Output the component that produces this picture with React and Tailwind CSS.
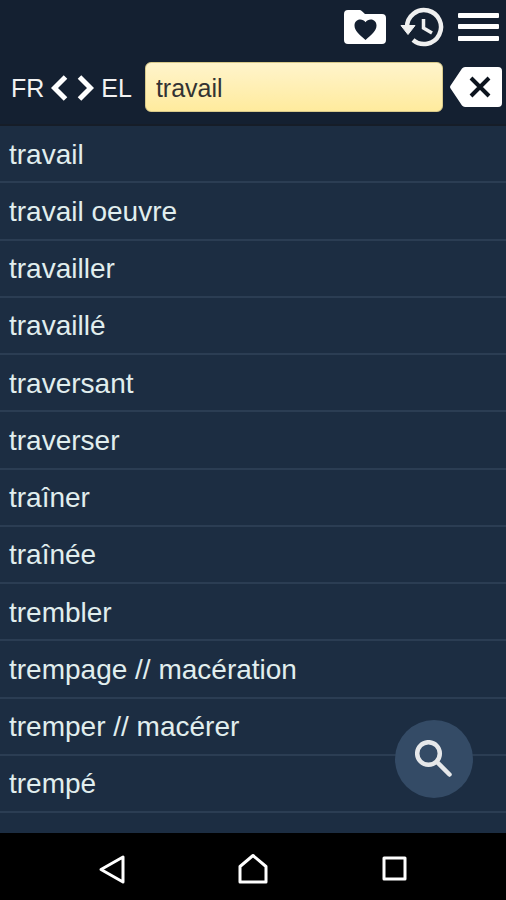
import { useState } from "react";

const words = [
  "travail",
  "travail oeuvre",
  "travailler",
  "travaillé",
  "traversant",
  "traverser",
  "traîner",
  "traînée",
  "trembler",
  "trempage // macération",
  "tremper // macérer",
  "trempé",
];

const FavoritesIcon = () => (
  <svg className="h-[34px] w-[42px]" viewBox="0 0 42 34" aria-hidden="true">
    <path
      fill="#fff"
      d="M4 0h11a4 4 0 0 1 3 1.200L21 4h17a4 4 0 0 1 4 4v22a4 4 0 0 1-4 4H4a4 4 0 0 1-4-4V4a4 4 0 0 1 4-4z"
    />
    <path
      fill="#142031"
      d="M21.500 30C15.500 24.500 10.500 21 10.500 15.500c0-3.500 2.500-6 5.700-6 2.100 0 4.100 1 5.300 2.700 1.200-1.700 3.200-2.700 5.300-2.700 3.200 0 5.700 2.500 5.700 6 0 5.500-5 9-11 14.500z"
    />
  </svg>
);

const HistoryIcon = () => (
  <svg className="h-10 w-11" viewBox="0 0 44 40" fill="none" stroke="#f0f0f0" aria-hidden="true">
    <path d="M7 20A17 17 0 1 1 13 33" strokeWidth="4.500" />
    <path d="M23.500 12v9l8.500 5" strokeWidth="3.500" />
    <path d="M1 18.500h14l-7 9z" fill="#f0f0f0" strokeWidth="1" strokeLinejoin="round" />
  </svg>
);

const MenuIcon = () => (
  <svg className="h-7 w-[41px]" viewBox="0 0 41 28" fill="#fff" aria-hidden="true">
    <rect width="41" height="5" rx="1" />
    <rect y="11" width="41" height="5" rx="1" />
    <rect y="23" width="41" height="5" rx="1" />
  </svg>
);

const SwapIcon = () => (
  <svg
    className="h-[26px] w-[43px]"
    viewBox="0 0 43 26"
    fill="none"
    stroke="#fff"
    strokeWidth="5"
    aria-hidden="true"
  >
    <path d="M14.500 2L3.500 13l11 11M28.500 2l11 11-11 11" />
  </svg>
);

const ClearIcon = () => (
  <svg className="h-10 w-[52px]" viewBox="0 0 52 40" aria-hidden="true">
    <path
      fill="#fff"
      d="M15 0h33a4 4 0 0 1 4 4v32a4 4 0 0 1-4 4H15a4 4 0 0 1-3-1.500L.600 21.500a2.500 2.500 0 0 1 0-3L12 1.500A4 4 0 0 1 15 0z"
    />
    <path d="M21 11l18 18M39 11L21 29" stroke="#0c131d" strokeWidth="4" />
  </svg>
);

const SearchIcon = () => (
  <svg className="size-[38px]" viewBox="0 0 38 38" fill="none" stroke="#e6e8ea" aria-hidden="true">
    <circle cx="13.500" cy="13.500" r="11.300" strokeWidth="4.500" />
    <path d="M22.500 22.500L34.500 34.500" strokeWidth="4.500" strokeLinecap="round" />
  </svg>
);

const NavIcon = ({ d }) => (
  <svg
    className="size-8"
    viewBox="0 0 32 32"
    fill="none"
    stroke="#fff"
    strokeWidth="3"
    strokeLinejoin="round"
    aria-hidden="true"
  >
    <path d={d} />
  </svg>
);

const Header = ({ query, setQuery }) => (
  <header className="bg-[#142031] border-b-2 border-[#161d28] pb-3">
    <div className="flex h-[54px] items-center justify-end gap-3.5 pr-[7px]">
      <button aria-label="Favorites">
        <FavoritesIcon />
      </button>
      <button aria-label="History">
        <HistoryIcon />
      </button>
      <button aria-label="Menu">
        <MenuIcon />
      </button>
    </div>
    <div className="flex items-center pl-[11px] pr-1 pt-2">
      <button
        className="mr-[13px] flex items-center gap-[7px] pt-0.5 text-[25px] leading-8 text-[#f2f2f2]"
        aria-label="FR EL, swap languages"
      >
        <span>FR</span>
        <SwapIcon />
        <span>EL</span>
      </button>
      <input
        type="text"
        aria-label="Search word"
        className="h-[50px] min-w-0 flex-1 rounded-md border border-[#d8c98a] bg-linear-to-b from-[#fff4cb] to-[#ffeb9d] px-2.5 pt-0.5 text-[25px] text-[#333] outline-none"
        value={query}
        onChange={(e) => setQuery(e.target.value)}
      />
      <button className="ml-[7px]" aria-label="Clear" onClick={() => setQuery("")}>
        <ClearIcon />
      </button>
    </div>
  </header>
);

export default function App() {
  const [query, setQuery] = useState("travail");

  return (
    <div className="flex min-h-screen flex-col bg-[#1c2d42] font-['Liberation_Sans',Arial,sans-serif]">
      <Header query={query} setQuery={setQuery} />

      <main className="relative flex flex-1 flex-col pb-5">
        <ul className="grid flex-1 auto-rows-fr">
          {words.map((word) => (
            <li key={word} className="border-b-2 border-[#2b3d53]">
              <button className="flex h-full w-full items-center px-[9px] pt-2.5 pb-2 text-left text-[28px] leading-9 text-[#e1eeee]">
                {word}
              </button>
            </li>
          ))}
        </ul>
        <button
          className="absolute bottom-[35px] right-[33px] flex size-[78px] items-center justify-center rounded-full bg-[#344b66]"
          aria-label="Search"
        >
          <SearchIcon />
        </button>
      </main>

      <nav className="grid h-[67px] grid-cols-3 items-center justify-items-center bg-black px-[42px] pt-1">
        <button aria-label="Back">
          <NavIcon d="M27 4v25L5 16.500z" />
        </button>
        <button aria-label="Home">
          <NavIcon d="M3 29V13.500L16 2.500l13 11V29z" />
        </button>
        <button aria-label="Recent apps">
          <NavIcon d="M6 5h21v21H6z" />
        </button>
      </nav>
    </div>
  );
}
